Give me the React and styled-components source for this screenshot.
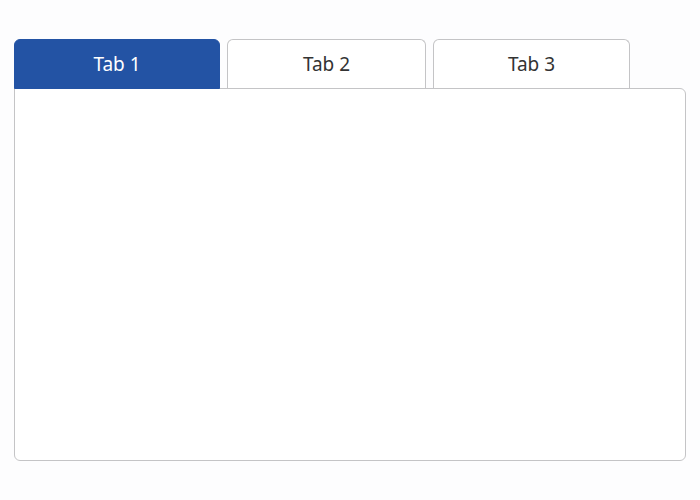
import React, { useState } from "react";
import styled, { createGlobalStyle } from "styled-components";

const Global = createGlobalStyle`
  html, body { margin: 0; padding: 0; background: #fdfdfe; }
  body { font-family: "Noto Sans", "Open Sans", sans-serif; }
`;

const Page = styled.div`
  padding: 39px 14px 0 14px;
  width: 672px;
`;

const TabRow = styled.div`
  display: flex;
  gap: 7px;
  align-items: flex-start;
  height: 50px;
  position: relative;
  z-index: 1;
  margin-bottom: -1px;
`;

const Tab = styled.button`
  box-sizing: border-box;
  width: ${(p) => p.$w}px;
  height: ${(p) => (p.$active ? 50 : 49)}px;
  padding: 0 0 ${(p) => (p.$active ? 1 : 0)}px 0;
  border: 1px solid ${(p) => (p.$active ? "#2353a4" : "#c4c4c6")};
  border-bottom: ${(p) => (p.$active ? "1px solid #2353a4" : "none")};
  border-radius: 6px 6px 0 0;
  background: ${(p) => (p.$active ? "#2353a4" : "#ffffff")};
  color: ${(p) => (p.$active ? "#ffffff" : "#333333")};
  font-family: "Noto Sans", "Open Sans", sans-serif;
  font-size: 19px;
  display: flex;
  align-items: center;
  justify-content: center;
  cursor: pointer;
`;

const Panel = styled.div`
  box-sizing: border-box;
  height: 373px;
  border: 1px solid #c4c4c6;
  border-radius: 0 6px 6px 6px;
  background: #ffffff;
`;

const tabs = [
  { label: "Tab 1", w: 206 },
  { label: "Tab 2", w: 199 },
  { label: "Tab 3", w: 197 },
];

export default function App() {
  const [active, setActive] = useState(0);
  return (
    <>
      <Global />
      <Page>
        <TabRow>
          {tabs.map((t, i) => (
            <Tab key={t.label} $w={t.w} $active={i === active} onClick={() => setActive(i)}>
              {t.label}
            </Tab>
          ))}
        </TabRow>
        <Panel />
      </Page>
    </>
  );
}
